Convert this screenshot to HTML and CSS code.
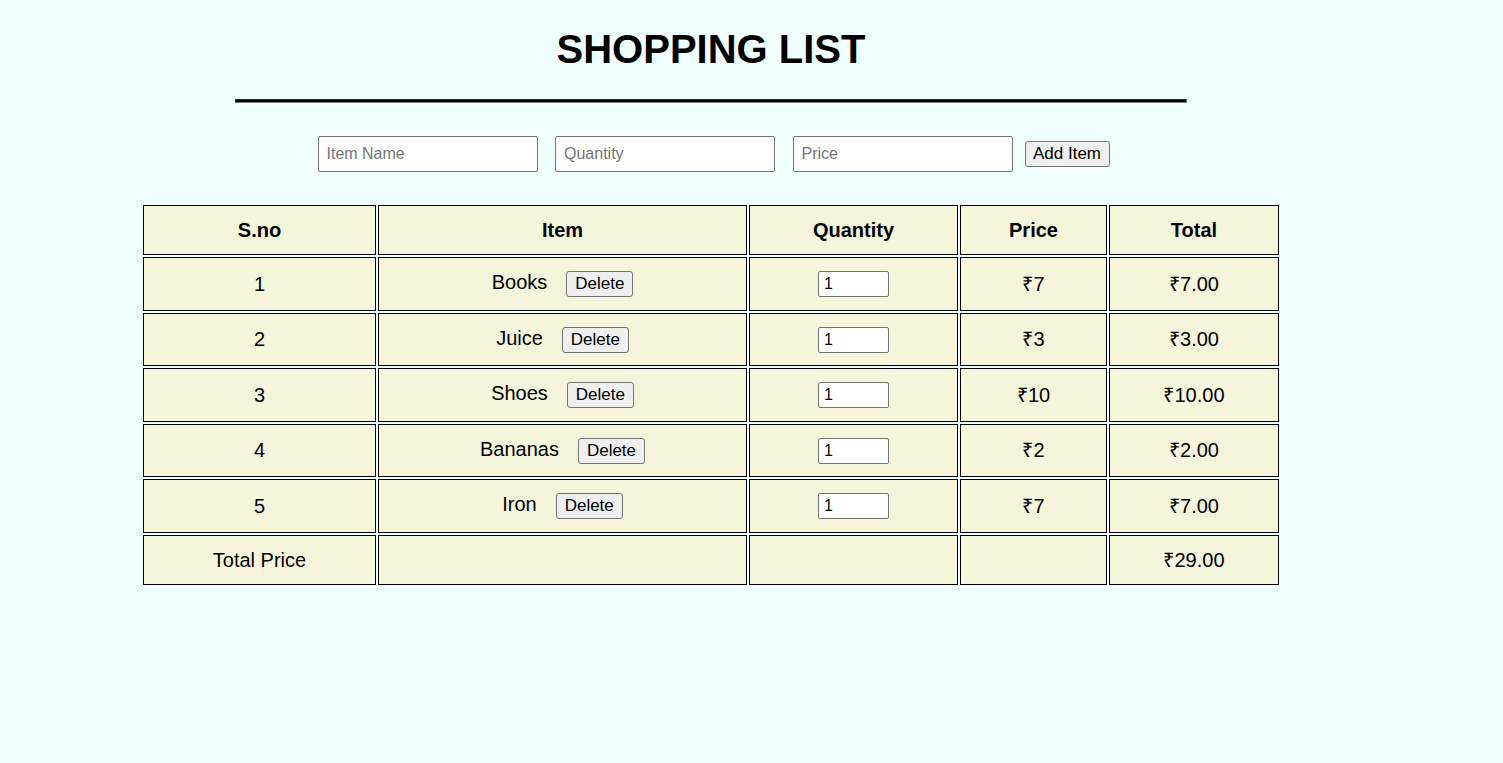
FILE: index.html
```html
<!DOCTYPE html>
<html lang="en">
<head>
<meta charset="utf-8">
<title>Shopping List</title>
<link rel="stylesheet" href="styles.css">
</head>
<body>
<div class="page">
  <h1 class="title">SHOPPING LIST</h1>
  <hr class="rule">
  <div class="form">
    <input class="field" type="text" placeholder="Item Name">
    <input class="field" type="text" placeholder="Quantity">
    <input class="field" type="text" placeholder="Price">
    <button class="btn add-btn" type="button">Add Item</button>
  </div>
  <table class="list">
    <colgroup>
      <col class="c1"><col class="c2"><col class="c3"><col class="c4"><col class="c5">
    </colgroup>
    <thead>
      <tr class="head-row"><th>S.no</th><th>Item</th><th>Quantity</th><th>Price</th><th>Total</th></tr>
    </thead>
    <tbody>
      <tr class="data-row"><td>1</td><td>Books<button class="btn del-btn" type="button">Delete</button></td><td><input class="qty" type="text" value="1"></td><td>₹7</td><td>₹7.00</td></tr>
      <tr class="data-row"><td>2</td><td>Juice<button class="btn del-btn" type="button">Delete</button></td><td><input class="qty" type="text" value="1"></td><td>₹3</td><td>₹3.00</td></tr>
      <tr class="data-row"><td>3</td><td>Shoes<button class="btn del-btn" type="button">Delete</button></td><td><input class="qty" type="text" value="1"></td><td>₹10</td><td>₹10.00</td></tr>
      <tr class="data-row"><td>4</td><td>Bananas<button class="btn del-btn" type="button">Delete</button></td><td><input class="qty" type="text" value="1"></td><td>₹2</td><td>₹2.00</td></tr>
      <tr class="data-row"><td>5</td><td>Iron<button class="btn del-btn" type="button">Delete</button></td><td><input class="qty" type="text" value="1"></td><td>₹7</td><td>₹7.00</td></tr>
      <tr class="total-row"><td>Total Price</td><td></td><td></td><td></td><td>₹29.00</td></tr>
    </tbody>
  </table>
</div>
</body>
</html>
```
FILE: styles.css
```css
html, body {
  margin: 0;
  padding: 0;
  background: #f0ffff;
  font-family: "Liberation Sans", Arial, sans-serif;
  color: #000;
}

.page {
  width: 1422px;
}

.title {
  margin: 26px 0 0;
  font-size: 40px;
  line-height: 46px;
  font-weight: bold;
  text-align: center;
}

.rule {
  width: 950px;
  height: 2px;
  margin: 27px auto 0;
  background: #000;
  border: 1px inset gray;
  box-sizing: content-box;
}

.form {
  display: flex;
  justify-content: center;
  align-items: center;
  padding-left: 5px;
  margin-top: 33px;
}

.field {
  box-sizing: border-box;
  width: 220px;
  height: 36px;
  margin-right: 17.5px;
  padding: 0 8px;
  border: 1px solid #767676;
  border-radius: 2px;
  background: #fff;
  font-family: "Liberation Sans", Arial, sans-serif;
  font-size: 16px;
  color: #000;
}

.field:nth-of-type(3) {
  margin-right: 12px;
}

.field::placeholder {
  color: #757575;
}

.btn {
  box-sizing: border-box;
  height: 26px;
  padding: 0 8px;
  border: 1px solid #767676;
  border-radius: 3px;
  background: #efefef;
  font-family: "Liberation Sans", Arial, sans-serif;
  font-size: 17px;
  color: #000;
}

.add-btn {
  width: 85px;
  padding: 0;
}

.list {
  margin: 31px 0 0 141px;
  width: 1140px;
  table-layout: fixed;
  border-collapse: separate;
  border-spacing: 2px;
}

.c1 { width: 233px; }
.c2 { width: 369px; }
.c3 { width: 209px; }
.c4 { width: 147px; }
.c5 { width: 170px; }

.list th,
.list td {
  border: 1px solid #000;
  background: #f5f5dc;
  text-align: center;
  font-size: 20px;
  line-height: 24px;
  padding: 12px 0;
}

.list th {
  font-weight: bold;
}

.data-row td {
  height: 53.5px;
  padding: 0;
  box-sizing: border-box;
}

.del-btn {
  width: 67px;
  padding: 0;
  margin-left: 19px;
}

.qty {
  box-sizing: border-box;
  width: 71px;
  height: 26px;
  padding: 1px 5px;
  border: 1px solid #767676;
  border-radius: 2px;
  background: #fff;
  font-family: "Liberation Sans", Arial, sans-serif;
  font-size: 16px;
  color: #000;
  vertical-align: middle;
}
```
